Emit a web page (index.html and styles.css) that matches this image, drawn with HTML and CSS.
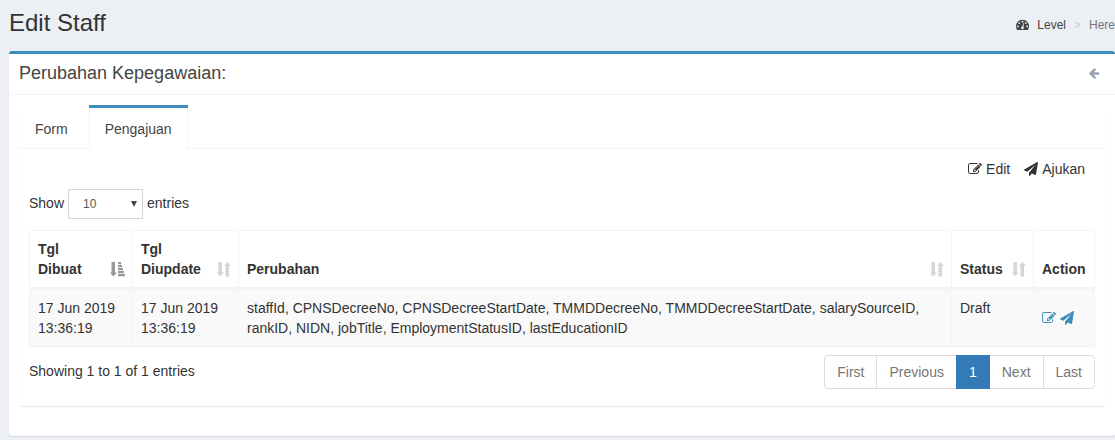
FILE: index.html
```html
<!DOCTYPE html>
<html lang="id">
<head>
<meta charset="utf-8">
<title>Edit Staff</title>
<link rel="stylesheet" href="styles.css">
</head>
<body>
<svg class="sprite" aria-hidden="true">
  <symbol id="edit" viewBox="0 0 1792 1792"><path d="M888 1184l116-116-152-152-116 116v56h96v96h56zm440-720q-16-16-33 1l-350 350q-17 17-1 33t33-1l350-350q17-17 1-33zm80 594v190q0 119-84.500 203.500t-203.500 84.500h-832q-119 0-203.500-84.500t-84.500-203.500v-832q0-119 84.500-203.500t203.500-84.500h832q63 0 117 25 15 7 18 23 3 17-9 29l-49 49q-14 14-32 8-23-6-45-6h-832q-66 0-113 47t-47 113v832q0 66 47 113t113 47h832q66 0 113-47t47-113v-126q0-13 9-22l64-64q15-15 35-7t20 29zm-96-738l288 288-672 672h-288v-288zm444 132l-92 92-288-288 92-92q28-28 68-28t68 28l152 152q28 28 28 68t-28 68z"/></symbol>
  <symbol id="plane" viewBox="0 0 1792 1792"><path d="M1764 11q33 24 27 64l-256 1536q-5 29-32 45-14 8-31 8-11 0-24-5l-453-185-242 295q-18 23-49 23-13 0-22-4-19-7-30.500-23.500t-11.500-36.500v-349l864-1059-1069 925-395-162q-37-14-40-55-2-40 32-59l1664-960q15-9 32-9 20 0 36 11z"/></symbol>
  <symbol id="gauge" viewBox="0 0 1792 1792"><path d="M384 1152q0-53-37.500-90.500t-90.500-37.500-90.500 37.500-37.500 90.500 37.500 90.500 90.500 37.500 90.500-37.500 37.500-90.500zm192-448q0-53-37.500-90.500t-90.500-37.500-90.500 37.500-37.500 90.500 37.500 90.500 90.500 37.500 90.500-37.500 37.500-90.500zm428 481l101-382q6-26-7.500-48.500t-38.500-29.500-48 6.500-30 39.500l-101 382q-60 5-107 43.500t-63 98.500q-20 77 20 146t117 89 146-20 89-117q16-60-6-117t-72-91zm660-33q0-53-37.500-90.500t-90.500-37.500-90.500 37.500-37.500 90.500 37.500 90.500 90.500 37.500 90.500-37.500 37.500-90.500zm-640-640q0-53-37.500-90.500t-90.500-37.500-90.500 37.500-37.500 90.500 37.500 90.500 90.500 37.500 90.500-37.500 37.500-90.500zm448 192q0-53-37.500-90.500t-90.500-37.500-90.500 37.500-37.500 90.500 37.500 90.500 90.500 37.500 90.500-37.500 37.500-90.500zm320 448q0 261-141 483-19 29-54 29h-1402q-35 0-54-29-141-221-141-483 0-182 71-348t191-286 286-191 348-71 348 71 286 191 191 286 71 348z"/></symbol>
  <symbol id="back" viewBox="0 0 1792 1792"><path d="M1664 896v128q0 53-32.500 90.500t-84.500 37.500h-704l293 294q38 36 38 90t-38 90l-75 76q-37 37-90 37-52 0-91-37l-651-652q-37-37-37-90 0-52 37-91l651-650q38-38 91-38 52 0 90 38l75 74q38 38 38 91t-38 91l-293 293h704q52 0 84.500 37.500t32.500 90.500z"/></symbol>
  <symbol id="sort" viewBox="0 0 14 16"><path d="M1.500 1h3.500v10.500h2L3.300 15.500 0 11.500h1.500zM8.500 15.500H12V5h2L10.500 1 7 5h1.500z"/></symbol>
  <symbol id="sort-asc" viewBox="0 0 15 16"><path d="M1.500 1h3.500v10.500h2L3.300 15.500 0 11.500h1.500zM8 1h3v2.300H8zM8 4h4v2.300H8zM8 7h5v2.300H8zM8 10h6v2.300H8zM8 13h7v2.300H8z"/></symbol>
</svg>

<header class="page-header">
  <h1>Edit Staff</h1>
  <nav class="breadcrumb" aria-label="Breadcrumb">
    <a href="#"><svg class="icon icon-gauge"><use href="#gauge"/></svg>Level</a>
    <span class="separator">&gt;</span>
    <span>Here</span>
  </nav>
</header>

<main class="box">
  <div class="box-header">
    <h2>Perubahan Kepegawaian:</h2>
    <button class="back" type="button" aria-label="Kembali"><svg class="icon icon-small"><use href="#back"/></svg></button>
  </div>
  <div class="box-body">
    <section class="tabs">
      <nav class="tab-list">
        <a class="tab" href="#">Form</a>
        <a class="tab active" href="#" aria-current="page">Pengajuan</a>
      </nav>
      <div class="tab-content">
        <div class="actions">
          <a href="#"><svg class="icon"><use href="#edit"/></svg>Edit</a>
          <a href="#"><svg class="icon"><use href="#plane"/></svg>Ajukan</a>
        </div>
        <div class="length">
          <label class="length-text" for="length">Show</label>
          <span class="select-wrap">
            <select id="length"><option>10</option><option>25</option><option>50</option></select>
            <svg class="caret" viewBox="0 0 6 6"><path d="M0 0h6L3 6z"/></svg>
          </span>
          <span class="length-text">entries</span>
        </div>
        <table>
          <colgroup><col class="col-created"><col class="col-updated"><col><col class="col-status"><col class="col-action"></colgroup>
          <thead>
            <tr>
              <th><div class="head"><span>Tgl Dibuat</span><svg class="sort sorted"><use href="#sort-asc"/></svg></div></th>
              <th><div class="head"><span>Tgl Diupdate</span><svg class="sort"><use href="#sort"/></svg></div></th>
              <th><div class="head"><span>Perubahan</span><svg class="sort"><use href="#sort"/></svg></div></th>
              <th><div class="head"><span>Status</span><svg class="sort"><use href="#sort"/></svg></div></th>
              <th>Action</th>
            </tr>
          </thead>
          <tbody>
            <tr>
              <td>17 Jun 2019 13:36:19</td>
              <td>17 Jun 2019 13:36:19</td>
              <td>staffId, CPNSDecreeNo, CPNSDecreeStartDate, TMMDDecreeNo, TMMDDecreeStartDate, salarySourceID, rankID, NIDN, jobTitle, EmploymentStatusID, lastEducationID</td>
              <td>Draft</td>
              <td class="row-actions"><div class="row-links"><a href="#" aria-label="Edit"><svg class="icon"><use href="#edit"/></svg></a><a href="#" aria-label="Ajukan"><svg class="icon"><use href="#plane"/></svg></a></div></td>
            </tr>
          </tbody>
        </table>
        <div class="table-footer">
          <span>Showing 1 to 1 of 1 entries</span>
          <nav class="pagination" aria-label="Halaman">
            <a href="#">First</a><a href="#">Previous</a><a class="current" href="#" aria-current="page">1</a><a href="#">Next</a><a href="#">Last</a>
          </nav>
        </div>
      </div>
    </section>
  </div>
</main>
</body>
</html>
```

FILE: styles.css
```css
* { box-sizing: border-box; }

body {
  margin: 0;
  padding: 8px 0 4px 9px;
  background: #ecf0f5;
  color: #333;
  font: 14px/20px "Liberation Sans", Arial, sans-serif;
}

a { color: inherit; text-decoration: none; }
h1, h2 { margin: 0; font-weight: 400; }

.sprite { position: absolute; width: 0; height: 0; }
.icon { flex: none; width: 14px; height: 14px; fill: currentColor; }
.icon-small { width: 12px; height: 12px; }
.icon-gauge { width: 13px; height: 13px; margin-bottom: 1px; }

.page-header {
  display: flex;
  align-items: center;
  justify-content: space-between;
  padding-bottom: 13px;
}
.page-header h1 { font-size: 24px; line-height: 30px; }

.breadcrumb {
  display: flex;
  gap: 8px;
  padding-top: 4px;
  color: #777;
  font-size: 12px;
}
.breadcrumb a { display: flex; align-items: center; gap: 8px; color: #444; }
.separator { color: #ccc; }

.box {
  border-top: 3px solid #3c8dbc;
  border-radius: 3px;
  background: #fff;
  box-shadow: 0 1px 1px rgba(0, 0, 0, 0.1);
}
.box-header {
  display: flex;
  align-items: center;
  justify-content: space-between;
  padding: 9px 15px 11px 10px;
  border-bottom: 1px solid #f4f4f4;
  color: #444;
}
.box-header h2 { font-size: 18px; line-height: 20px; }
.back {
  display: flex;
  padding: 0;
  border: 0;
  background: none;
  color: #97a0b3;
}
.box-body { padding: 10px 10px 30px; }

.tabs { border-radius: 3px; box-shadow: 0 1px 1px rgba(0, 0, 0, 0.1); }
.tab-list { display: flex; border-bottom: 1px solid #f4f4f4; }
.tab {
  margin: 0 5px -1px 0;
  padding: 11px 16px 10px;
  border-top: 3px solid transparent;
  color: #444;
}
.tab.active {
  border-top-color: #3c8dbc;
  background: #fff;
  box-shadow: inset 1px 0 #f4f4f4, inset -1px 0 #f4f4f4;
}
.tab-content { padding: 10px 10px 17px; }

.actions { display: flex; justify-content: flex-end; gap: 14px; padding-right: 10px; }
.actions a { display: flex; align-items: center; gap: 4px; }

.length { display: flex; align-items: center; gap: 4px; padding: 10px 0 11px; }
.length-text { padding-bottom: 2px; }
.select-wrap { position: relative; width: 75px; }
select {
  display: block;
  width: 100%;
  height: 30px;
  padding: 0 14px;
  border: 1px solid #d2d6de;
  border-radius: 0;
  background: #fff;
  color: #555;
  font: 12px/18px "Liberation Sans", Arial, sans-serif;
  appearance: none;
}
.caret {
  position: absolute;
  top: 12px;
  right: 6px;
  width: 6px;
  height: 6px;
  fill: #444;
  pointer-events: none;
}

table {
  width: 100%;
  border: 1px solid #f4f4f4;
  border-spacing: 0;
  border-collapse: collapse;
  table-layout: fixed;
}
.col-created { width: 103px; }
.col-updated { width: 106px; }
.col-status { width: 82px; }
.col-action { width: 61px; }
th, td { padding: 8px; border: 1px solid #f4f4f4; text-align: left; vertical-align: top; }
th { padding-right: 7px; border-bottom-width: 3px; vertical-align: bottom; }
th:last-child { white-space: nowrap; }
tbody tr { background: #f9f9f9; }
.head { display: flex; align-items: flex-end; justify-content: space-between; gap: 8px; }
.sort { flex: none; width: 14px; height: 16px; margin-bottom: 2px; fill: #d6d6d6; }
.sorted { width: 15px; fill: #999; }
.row-actions { vertical-align: middle; }
.row-links { display: flex; gap: 4px; color: #3c8dbc; }
.row-links a { display: flex; }

.table-footer { display: flex; justify-content: space-between; padding-top: 8px; }
.table-footer > span { padding-top: 6px; }
.pagination { display: flex; color: #777; }
.pagination a { padding: 6px 12px; border: 1px solid #ddd; background: #fff; }
.pagination a + a { margin-left: -1px; }
.pagination a:first-child { border-radius: 4px 0 0 4px; }
.pagination a:last-child { border-radius: 0 4px 4px 0; }
.pagination .current { z-index: 1; border-color: #337ab7; background: #337ab7; color: #fff; }
```
